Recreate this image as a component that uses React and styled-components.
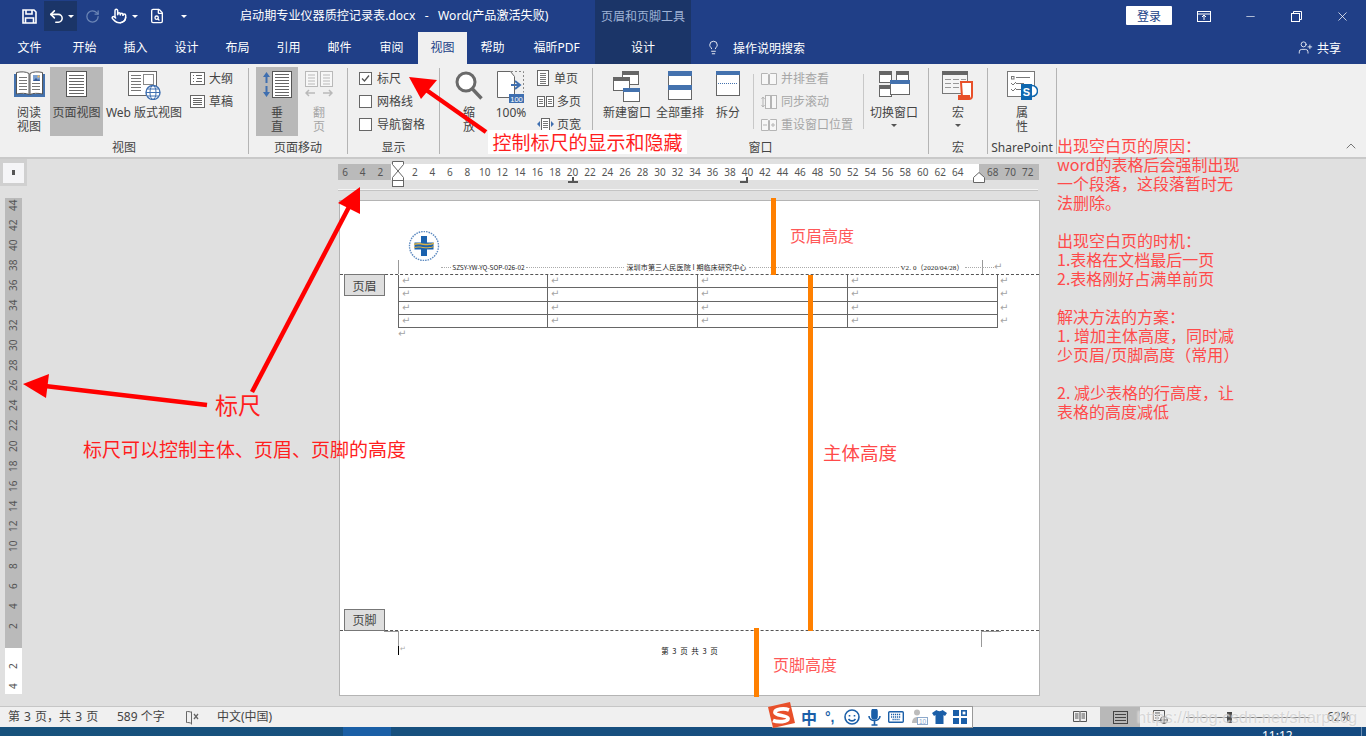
import React from 'react';
import styled, { createGlobalStyle } from 'styled-components';
import { Undo2, RotateCw, Pointer, FileSearch, Lightbulb, UserPlus, Minus, X, ChevronUp } from 'lucide-react';

const UI_FONT = '"Noto Sans", "Noto Sans CJK SC", sans-serif';
const CJK_FONT = '"Noto Sans CJK SC", "Noto Sans", sans-serif';

const GlobalStyle = createGlobalStyle`
  html, body {
    margin: 0;
    padding: 0;
    overflow: hidden;
    font-family: ${CJK_FONT};
  }
`;

const Shell = styled.div`
  position: relative;
  display: flex;
  flex-direction: column;
  width: 1366px;
  height: 736px;
  overflow: hidden;
  background: #e0e0e0;
`;

/* ---------- title bar ---------- */

const TitleBar = styled.div`
  display: flex;
  align-items: stretch;
  height: 32px;
  background: #203f87;
  color: #fff;
  font-size: 12px;
`;

const QuickAccess = styled.div`
  display: flex;
  align-items: center;
  width: 240px;
  padding-left: 22px;
  box-sizing: border-box;
`;

const QatSlot = styled.div`
  display: flex;
  align-items: center;
  justify-content: ${(p) => (p.$center ? 'center' : 'flex-start')};
  width: ${(p) => p.$w}px;
  height: 30px;
  margin-left: ${(p) => p.$ml || 0}px;
  background: ${(p) => (p.$active ? '#1b3568' : 'transparent')};
  color: ${(p) => (p.$dim ? '#6c86b6' : '#fff')};
`;

const Caret = styled.span`
  width: 0;
  height: 0;
  margin-left: ${(p) => p.$ml || 0}px;
  border-left: 3px solid transparent;
  border-right: 3px solid transparent;
  border-top: 3px solid ${(p) => p.$color || '#fff'};
`;

const DocTitle = styled.div`
  display: flex;
  align-items: center;
  width: 355px;
  padding-bottom: 2px;
  box-sizing: border-box;
  white-space: pre;
  font-size: 12.1px;
  font-family: ${UI_FONT};
`;

const ToolCaption = styled.div`
  display: flex;
  align-items: center;
  justify-content: center;
  width: 96px;
  padding-bottom: 2px;
  box-sizing: border-box;
  background: #1b3568;
  color: #9fb3d6;
  font-size: 12px;
`;

const LoginButton = styled.div`
  display: flex;
  align-items: center;
  justify-content: center;
  width: 46px;
  height: 19px;
  margin: 6px 0 0 435px;
  background: #fff;
  border-radius: 1px;
  color: #203f87;
  font-size: 12px;
`;

const WinBtn = styled.div`
  display: flex;
  align-items: center;
  justify-content: center;
  width: 46px;
  margin-left: ${(p) => p.$ml || 0}px;
`;

/* ---------- tabs ---------- */

const TabBar = styled.div`
  display: flex;
  align-items: stretch;
  height: 32px;
  background: #203f87;
  color: #fff;
  font-size: 12px;
`;

const Tab = styled.div`
  display: flex;
  align-items: center;
  justify-content: center;
  width: ${(p) => p.$w}px;
  padding-bottom: 2px;
  box-sizing: border-box;
  background: ${(p) => (p.$active ? '#f0f0f0' : p.$tool ? '#1b3568' : 'transparent')};
  color: ${(p) => (p.$active ? '#203f87' : '#fff')};
  font-family: ${UI_FONT};
`;

const SearchHint = styled.div`
  display: flex;
  align-items: center;
  gap: 12px;
  margin-left: 15px;
  padding-bottom: 2px;
  width: 592px;
  box-sizing: border-box;
`;

const ShareBox = styled.div`
  display: flex;
  align-items: center;
  gap: 4px;
  padding-bottom: 2px;
  box-sizing: border-box;
`;

/* ---------- ribbon ---------- */

const Ribbon = styled.div`
  position: relative;
  display: flex;
  height: 95px;
  box-sizing: border-box;
  padding-top: 4px;
  background: #f0f0f0;
  border-bottom: 2px solid #c9c9c9;
  color: #444;
  font-size: 12px;
`;

const Group = styled.div`
  display: flex;
  flex-direction: column;
  box-sizing: border-box;
  width: ${(p) => p.$w}px;
  height: 86px;
  border-right: 1px solid #b4b4b4;
`;

const GroupBody = styled.div`
  display: flex;
  height: 69px;
  margin-top: -1px;
  padding-left: ${(p) => p.$pl || 0}px;
`;

const GroupLabel = styled.div`
  height: 18px;
  line-height: 18px;
  padding-top: 3px;
  text-align: center;
  white-space: nowrap;
  font-family: ${UI_FONT};
`;

const BigButton = styled.div`
  display: flex;
  flex-direction: column;
  align-items: center;
  flex: none;
  width: ${(p) => p.$w}px;
  height: 69px;
  background: ${(p) => (p.$active ? '#b8b8b8' : 'transparent')};
  color: ${(p) => (p.$off ? '#a6a6a6' : '#444')};
`;

const BigIcon = styled.div`
  display: flex;
  align-items: flex-start;
  justify-content: center;
  height: 35px;
  padding-top: 4px;
`;

const BigText = styled.div`
  line-height: 14px;
  text-align: center;
  white-space: nowrap;
  font-family: ${UI_FONT};
`;

const CaretRow = styled.div`
  display: flex;
  justify-content: center;
  padding-top: 4px;
`;

const SmallList = styled.div`
  display: flex;
  flex-direction: column;
  flex: none;
  margin-left: ${(p) => p.$ml || 0}px;
  width: ${(p) => p.$w}px;
`;

const SmallRow = styled.div`
  display: flex;
  align-items: center;
  gap: ${(p) => p.$gap || 4}px;
  height: 23px;
  white-space: nowrap;
  color: ${(p) => (p.$off ? '#a6a6a6' : '#444')};
`;

const SmallText = styled.span`
  position: relative;
  top: -1px;
`;

const CheckBox = styled.span`
  display: flex;
  align-items: center;
  justify-content: center;
  width: 11px;
  height: 11px;
  border: 1px solid #666;
  background: #fff;
`;

const InnerDivider = styled.div`
  flex: none;
  width: 1px;
  height: 55px;
  margin: 7px ${(p) => p.$r}px 0 ${(p) => p.$l}px;
  background: #c8c8c8;
`;

const Collapse = styled.div`
  position: absolute;
  right: 7px;
  bottom: 0;
  color: #555;
`;

/* ---------- workspace ---------- */

const Workspace = styled.div`
  display: grid;
  grid-template-columns: 339px 701px;
  grid-template-rows: 41px 1fr;
  flex: none;
  height: 547px;
  background: #e0e0e0;
`;

const Corner = styled.div`
  display: flex;
  align-items: center;
  justify-content: center;
  width: 27px;
  height: 27px;
  background: #d0d0d0;
`;

const CornerInner = styled.div`
  display: flex;
  align-items: center;
  justify-content: center;
  width: 21px;
  height: 20px;
  background: #f5f5f7;
  &::after {
    content: '';
    width: 3px;
    height: 5px;
    background: #555;
  }
`;

const TopRulerWrap = styled.div`
  position: relative;
  margin-left: -1px;
  padding-top: 5px;
`;

const TopRuler = styled.div`
  display: flex;
  height: 16px;
  width: 701px;
  color: #555;
  font: 10px/16px "Noto Sans", sans-serif;
`;

const RulerSegment = styled.div`
  display: flex;
  flex: none;
  justify-content: ${(p) => (p.$end ? 'flex-end' : 'flex-start')};
  width: ${(p) => p.$w}px;
  padding: 0 ${(p) => p.$pr || 0}px 0 ${(p) => p.$pl || 0}px;
  box-sizing: border-box;
  background: ${(p) => (p.$white ? '#fff' : '#bababa')};
`;

const TopTick = styled.span`
  flex: none;
  width: 17.52px;
  text-align: center;
`;

const RulerRule = styled.div`
  width: 700px;
  height: 1px;
  margin-top: 9px;
  background: #f4f4f4;
  border-bottom: 1px solid #c4c4c4;
`;

const Marker = styled.svg`
  position: absolute;
  left: ${(p) => p.$x}px;
  top: ${(p) => p.$y}px;
`;

const LeftRail = styled.div`
  display: flex;
  flex-direction: column;
  padding: 0 0 0 5px;
  margin-top: -2px;
`;

const VerticalRuler = styled.div`
  display: flex;
  flex-direction: column;
  width: 17px;
  color: #555;
  font: 10px/17px "Noto Sans", sans-serif;
`;

const VerticalSegment = styled.div`
  display: flex;
  flex-direction: column;
  flex: none;
  justify-content: ${(p) => (p.$end ? 'flex-end' : 'flex-start')};
  height: ${(p) => p.$h}px;
  padding: ${(p) => p.$pt || 0}px 0 ${(p) => p.$pb || 0}px;
  box-sizing: border-box;
  background: ${(p) => (p.$white ? '#fff' : '#bababa')};
`;

const VerticalTick = styled.span`
  display: flex;
  align-items: center;
  justify-content: center;
  flex: none;
  height: 20.05px;
  writing-mode: vertical-rl;
  transform: rotate(180deg);
`;

/* ---------- page ---------- */

const Page = styled.div`
  position: relative;
  display: flex;
  flex-direction: column;
  box-sizing: border-box;
  width: 701px;
  height: 496px;
  background: #fff;
  border: 1px solid #b4b4b4;
`;

const HeaderArea = styled.div`
  position: relative;
  display: flex;
  flex-direction: column;
  justify-content: flex-end;
  flex: none;
  height: 74px;
  box-sizing: border-box;
  padding-left: 58px;
  border-bottom: 1px dashed #555;
`;

const LogoBox = styled.div`
  display: flex;
  margin: 0 0 -1px 10px;
`;

const HeaderLine = styled.div`
  display: flex;
  align-items: center;
  width: 583px;
  height: 14px;
  border-left: 1px solid #999;
  border-right: 1px solid #999;
  color: #222;
  font-size: 7px;
  white-space: nowrap;
`;

const HeaderCell = styled.span`
  flex: none;
  width: ${(p) => p.$w}px;
  text-align: center;
  font-family: ${(p) => (p.$serif ? '"Liberation Serif", "Noto Sans CJK SC", serif' : CJK_FONT)};
  font-size: ${(p) => p.$size || 7}px;
  letter-spacing: ${(p) => p.$ls || 0}px;
`;

const Leader = styled.span`
  flex: none;
  width: ${(p) => p.$w}px;
  margin-left: ${(p) => p.$ml || 0}px;
  border-top: 1px dotted #aaa;
`;

const HeaderTail = styled.span`
  position: absolute;
  left: 642px;
  bottom: 0;
  display: flex;
  align-items: center;
  height: 14px;
`;

const ZoneTag = styled.div`
  position: absolute;
  left: 4px;
  top: ${(p) => p.$top}px;
  z-index: 1;
  display: flex;
  align-items: center;
  justify-content: center;
  width: 39px;
  height: 20px;
  background: #dedede;
  border: 1px solid #777;
  color: #444;
  font-size: 12px;
`;

const DocTable = styled.div`
  display: flex;
  flex-direction: column;
  margin-left: 58px;
`;

const TableRow = styled.div`
  display: grid;
  grid-template-columns: repeat(4, 150px) 10px;
  height: 13.3px;
`;

const TableCell = styled.div`
  box-sizing: border-box;
  border-right: 1px solid #666;
  border-bottom: 1px solid #666;
  border-left: ${(p) => (p.$first ? '1px solid #666' : 'none')};
  padding-left: 3px;
`;

const ParaMark = styled.span`
  display: block;
  color: #a4a4a4;
  font: 10px/12px "DejaVu Sans", sans-serif;
  padding-left: ${(p) => p.$pl || 0}px;
`;

const BodyArea = styled.div`
  flex: 1;
  margin-left: 58px;
`;

const FooterArea = styled.div`
  position: relative;
  flex: none;
  height: 65px;
  box-sizing: border-box;
  padding-top: 15px;
  border-top: 1px dashed #555;
  text-align: center;
  color: #111;
  font-size: 7.5px;
  line-height: 10px;
  word-spacing: 2px;
`;

const CropMark = styled.div`
  position: absolute;
  top: 0;
  left: ${(p) => p.$x}px;
  width: ${(p) => p.$w}px;
  height: 15px;
  border-top: 1px solid #999;
  border-${(p) => p.$side}: 1px solid #999;
`;

const CursorMark = styled.div`
  position: absolute;
  left: 58px;
  top: 15px;
  width: 1px;
  height: 9px;
  background: #000;
`;

const FooterPara = styled.div`
  position: absolute;
  left: 60px;
  top: 13px;
  color: #aaa;
  font: 7px/10px "DejaVu Sans", sans-serif;
`;

/* ---------- status bar ---------- */

const StatusBar = styled.div`
  display: flex;
  align-items: center;
  flex: none;
  height: 21px;
  box-sizing: border-box;
  border-top: 1px solid #c6c6c6;
  background: #f0f0f0;
  color: #444;
  font-size: 12px;
  white-space: nowrap;
`;

const StatusText = styled.span`
  flex: none;
  width: ${(p) => p.$w}px;
  margin-left: ${(p) => p.$ml || 0}px;
  padding-bottom: 2px;
  font-family: ${UI_FONT};
  word-spacing: ${(p) => p.$ws || 0}px;
`;

const ViewSlot = styled.div`
  display: flex;
  align-items: center;
  justify-content: center;
  flex: none;
  width: ${(p) => p.$w}px;
  height: 20px;
  margin-left: ${(p) => p.$ml || 0}px;
  background: ${(p) => (p.$active ? '#b8b8b8' : 'transparent')};
`;

const ZoomTrack = styled.div`
  position: relative;
  flex: none;
  width: 124px;
  height: 1px;
  margin-left: 18px;
  background: #777;
  &::after {
    content: '';
    position: absolute;
    left: 41px;
    top: -5px;
    width: 5px;
    height: 11px;
    background: #444;
  }
`;

const Watermark = styled.div`
  position: absolute;
  left: 1137px;
  top: 705px;
  color: rgba(200, 200, 200, 0.7);
  font: 16.5px/24px "Liberation Sans", sans-serif;
  text-shadow: 0 0 2px rgba(255, 255, 255, 0.9);
  white-space: nowrap;
`;

const Taskbar = styled.div`
  display: flex;
  flex: 1;
  overflow: hidden;
  background: linear-gradient(90deg, #17527c 0%, #174e80 60%, #144a80 100%);
  color: #fff;
  font-size: 12px;
`;

const TaskActive = styled.div`
  width: 48px;
  margin-left: 343px;
  background: #1a5fa6;
`;

const Clock = styled.div`
  margin-left: 871px;
  line-height: 16px;
  margin-top: 1px;
  font-family: ${UI_FONT};
`;

const TaskEdge = styled.div`
  width: 1px;
  margin: 0 4px 0 auto;
  background: #6f8fb3;
`;

const ImeBar = styled.div`
  position: absolute;
  left: 772px;
  top: 706px;
  display: flex;
  align-items: center;
  gap: 8px;
  box-sizing: border-box;
  width: 201px;
  height: 22px;
  padding-left: 29px;
  background: #fff;
  border: 1px solid #999;
  border-left: none;
  color: #1b5fa8;
`;

const ImeChar = styled.span`
  font: 700 16px/20px ${CJK_FONT};
  color: #1b5fa8;
`;

const ImePunct = styled.span`
  width: 11px;
  font: 700 14px/16px "Liberation Sans", sans-serif;
  white-space: nowrap;
`;

const ImeItem = styled.span`
  display: flex;
  margin-left: ${(p) => p.$ml || 0}px;
`;

const ImeLogo = styled.svg`
  position: absolute;
  left: 767px;
  top: 702px;
`;

/* ---------- red notes drawn over the screenshot ---------- */

const Overlay = styled.svg`
  position: absolute;
  left: 0;
  top: 0;
  pointer-events: none;
`;

const Note = styled.div`
  position: absolute;
  left: ${(p) => p.$x}px;
  top: ${(p) => p.$y}px;
  color: ${(p) => p.$color || '#ff1e1e'};
  font: ${(p) => p.$size}px/1.2 ${CJK_FONT};
  white-space: nowrap;
`;

const WhiteNote = styled(Note)`
  display: flex;
  align-items: center;
  justify-content: center;
  width: 199px;
  height: 24px;
  background: #fff;
  line-height: 24px;
`;

const SideNote = styled.div`
  position: absolute;
  left: 1057px;
  top: 136px;
  color: #ff4a4a;
  font: 16px/19px ${CJK_FONT};
  white-space: pre;
`;

/* ---------- icons ---------- */

const lines = (x1, x2, ys, color = '#777') =>
  ys.map((y) => <line key={y} x1={x1} x2={x2} y1={y + 0.5} y2={y + 0.5} stroke={color} />);

const SaveIcon = () => (
  <svg width="15" height="15" viewBox="0 0 15 15" fill="none" stroke="#fff" strokeWidth="1.6">
    <path d="M1 1h11l2 2v11H1z" />
    <path d="M4 1v4h6V1M3.5 14V9h8v5" />
  </svg>
);

const BookIcon = () => (
  <svg width="31" height="26" viewBox="0 0 31 26">
    <path d="M0 3h2v20h27V3h2v23H0z" fill="#4472ae" />
    <path d="M2.500 1.500C7 .5 12 .5 15 2.500V23.500C12 22 7 22 2.500 23z" fill="#fff" stroke="#555" />
    <path d="M28.500 1.500C24 .5 19 .5 16 2.500V23.500C19 22 24 22 28.500 23z" fill="#fff" stroke="#555" />
    {lines(5, 13, [6, 9, 12, 15, 18])}
    {lines(18, 26, [12, 15, 18])}
    <rect x="19" y="4" width="7" height="6" fill="#7ca0cf" />
    <path d="M19 10l3-3 2 2 1-1 1 2z" fill="#345a96" />
    <rect x="23.500" y="4.500" width="2" height="2" fill="#f0b85a" />
  </svg>
);

const PageIcon = () => (
  <svg width="21" height="26" viewBox="0 0 21 26">
    <rect x=".5" y=".5" width="20" height="25" fill="#fff" stroke="#555" />
    {lines(3, 18, [4, 7, 10, 13, 16, 19, 22], '#666')}
  </svg>
);

const WebIcon = () => (
  <svg width="33" height="29" viewBox="0 0 33 29">
    <rect x=".5" y=".5" width="28" height="24" fill="#fff" stroke="#666" />
    {lines(3, 13, [4, 7, 10, 13, 16, 19], '#777')}
    <rect x="15.500" y="3.500" width="10" height="10" fill="#fff" stroke="#888" />
    <circle cx="25" cy="21.500" r="7" fill="#fff" stroke="#3f6fb0" strokeWidth="1.400" />
    <ellipse cx="25" cy="21.500" rx="3" ry="7" fill="none" stroke="#3f6fb0" />
    <path d="M18 21.500h14M19.500 18h11M19.500 25h11" stroke="#3f6fb0" />
  </svg>
);

const OutlineIcon = () => (
  <svg width="15" height="13" viewBox="0 0 15 13">
    <rect x=".5" y=".5" width="14" height="12" fill="#fff" stroke="#666" />
    <path d="M3 3.500h1M3 6.500h1M3 9.500h1M6 3.500h6M7 6.500h5M6 9.500h6" stroke="#666" />
  </svg>
);

const DraftIcon = () => (
  <svg width="15" height="13" viewBox="0 0 15 13">
    <rect x=".5" y=".5" width="14" height="12" fill="#fff" stroke="#666" />
    {lines(3, 12, [3, 5, 7, 9], '#666')}
  </svg>
);

const VerticalIcon = () => (
  <svg width="30" height="27" viewBox="0 0 30 27">
    <rect x="10.500" y=".5" width="19" height="26" fill="#fff" stroke="#555" />
    {lines(13, 27, [3, 6, 9, 12, 15, 18, 21, 24], '#666')}
    <path d="M4.500 1L1 6h2.500v6h2V6H8zM4.500 26L1 21h2.500v-6h2v6H8z" fill="#3f6fb0" />
  </svg>
);

const FlipIcon = () => (
  <svg width="28" height="27" viewBox="0 0 28 27" stroke="#b9b9b9" fill="#f7f7f7">
    <rect x=".5" y=".5" width="12" height="15" />
    <rect x="15.500" y=".5" width="12" height="15" />
    <path d="M3 4h7M3 7h7M3 10h7M3 13h7M18 4h7M18 7h7M18 10h7M18 13h7" />
    <path d="M1 22h9M4 19l-3 3 3 3M18 22h9M24 19l3 3-3 3" fill="none" strokeWidth="1.500" />
  </svg>
);

const MagnifierIcon = () => (
  <svg width="28" height="29" viewBox="0 0 28 29" fill="none">
    <circle cx="11" cy="11" r="9" fill="#fff" stroke="#6a6a6a" strokeWidth="3" />
    <path d="M17.500 18l9 9.500" stroke="#6a6a6a" strokeWidth="3.400" />
  </svg>
);

const ZoomHundredIcon = () => (
  <svg width="28" height="32" viewBox="0 0 28 32">
    <path d="M.5.5h13l4 5v21H.5z" fill="#fff" stroke="#666" />
    <path d="M14 .5h12.500v21" fill="none" stroke="#888" strokeDasharray="2 2" />
    <path d="M14 14h8M18 10l5 4-5 4" fill="none" stroke="#3f6fb0" strokeWidth="2" />
    <rect x="12" y="23" width="15" height="9" fill="#3f6fb0" />
    <text x="19.500" y="30.500" textAnchor="middle" fontSize="7.500" fill="#fff" fontFamily="Liberation Sans">100</text>
  </svg>
);

const SinglePageIcon = () => (
  <svg width="13" height="17" viewBox="0 0 13 17">
    <rect x=".5" y=".5" width="11" height="15" fill="#fff" stroke="#666" />
    {lines(3, 9, [3, 5, 7, 9, 11, 13], '#777')}
  </svg>
);

const MultiPageIcon = () => (
  <svg width="17" height="11" viewBox="0 0 17 11">
    <rect x=".5" y=".5" width="7" height="10" fill="#fff" stroke="#666" />
    <rect x="9.500" y=".5" width="7" height="10" fill="#fff" stroke="#666" />
    {lines(2, 6, [3, 5, 7], '#777')}
    {lines(11, 15, [3, 5, 7], '#777')}
  </svg>
);

const PageWidthIcon = () => (
  <svg width="17" height="13" viewBox="0 0 17 13">
    <rect x="4.500" y=".5" width="8" height="12" fill="#fff" stroke="#666" />
    {lines(6, 11, [3, 5, 7, 9], '#777')}
    <path d="M3 3v6L0 6zM14 3v6l3-3z" fill="#3f6fb0" />
  </svg>
);

const MiniWindow = ({ x, y, w, h, bar = '#666' }) => (
  <g>
    <rect x={x + 0.5} y={y + 0.5} width={w - 1} height={h - 1} fill="#fff" stroke="#666" />
    <rect x={x} y={y} width={w} height="4" fill={bar} />
  </g>
);

const NewWindowIcon = () => (
  <svg width="28" height="31" viewBox="0 0 28 31">
    <MiniWindow x={9} y={0} w={17} h={14} />
    <MiniWindow x={0} y={6} w={17} h={14} />
    <MiniWindow x={10} y={17} w={17} h={14} bar="#4472ae" />
  </svg>
);

const ArrangeIcon = () => (
  <svg width="24" height="29" viewBox="0 0 24 29">
    <rect x=".5" y=".5" width="23" height="28" fill="#fff" stroke="#666" />
    <rect width="24" height="5" fill="#4472ae" />
    <rect y="14" width="24" height="5" fill="#4472ae" />
  </svg>
);

const SplitIcon = () => (
  <svg width="24" height="25" viewBox="0 0 24 25">
    <rect x=".5" y=".5" width="23" height="24" fill="#fff" stroke="#666" />
    <rect width="24" height="4" fill="#4472ae" />
    <path d="M2 12.500h20" stroke="#4472ae" strokeDasharray="1 1" />
  </svg>
);

const SideBySideIcon = () => (
  <svg width="16" height="12" viewBox="0 0 16 12" fill="#f7f7f7" stroke="#b5b5b5">
    <path d="M.5.5h6l1 1v10h-7zM8.500 1.500l1-1h6v11h-7z" />
  </svg>
);

const SyncScrollIcon = () => (
  <svg width="16" height="14" viewBox="0 0 16 14" fill="#f7f7f7" stroke="#b5b5b5">
    <rect x="4.500" y=".5" width="5" height="13" />
    <rect x="10.500" y=".5" width="5" height="13" />
    <path d="M2 2v10M.5 4L2 2l1.500 2M.5 10L2 12l1.500-2" fill="none" />
  </svg>
);

const ResetWindowIcon = () => (
  <svg width="16" height="12" viewBox="0 0 16 12" fill="#f7f7f7" stroke="#b5b5b5">
    <path d="M.5.5h6l1 1v10h-7zM8.500 1.500l1-1h6v11h-7z" />
    <path d="M2 6h4M10 6h4M12 4v4" fill="none" />
  </svg>
);

const SwitchIcon = () => (
  <svg width="31" height="27" viewBox="0 0 31 27">
    <MiniWindow x={0} y={0} w={13} h={12} />
    <MiniWindow x={17} y={0} w={13} h={12} />
    <MiniWindow x={0} y={14} w={13} h={12} />
    <MiniWindow x={11} y={9} w={20} h={15} bar="#4472ae" />
  </svg>
);

const MacroIcon = () => (
  <svg width="32" height="29" viewBox="0 0 32 29">
    <rect x=".5" y=".5" width="25" height="22" fill="#f5f5f5" stroke="#777" />
    <rect width="26" height="4" fill="#666" />
    <path d="M3 8.500h6M11 8.500h6M19 8.500h5M3 12.500h6M11 12.500h6M19 12.500h5M3 16.500h6M11 16.500h6" stroke="#999" />
    <path d="M19 11h11v14a3 3 0 01-3 3H17v-2h3z" fill="#fff" stroke="#e8502a" strokeWidth="2" />
    <path d="M16 24h12v4H16z" fill="#e8502a" />
  </svg>
);

const SharePointIcon = () => (
  <svg width="31" height="30" viewBox="0 0 31 30">
    <rect x=".5" y=".5" width="27" height="25" fill="#fff" stroke="#777" />
    <rect x="4.500" y="5.500" width="2.500" height="2.500" fill="none" stroke="#777" />
    <path d="M9 6.500h14M9 12.500h8M9 18.500h6" stroke="#777" />
    <path d="M4 12l2 2 3-3M4 18l2 2 3-3" fill="none" stroke="#777" />
    <circle cx="25" cy="20" r="5.500" fill="#fff" stroke="#0f68b0" strokeWidth="1.500" />
    <rect x="14" y="13" width="11" height="16" fill="#0f68b0" />
    <text x="19.500" y="25" textAnchor="middle" fontSize="11" fontWeight="700" fill="#fff" fontFamily="Liberation Sans">S</text>
  </svg>
);

const HospitalLogo = () => (
  <svg width="32" height="30" viewBox="0 0 32 30">
    <circle cx="16" cy="15" r="14.500" fill="#fff" stroke="#5d8ac0" strokeWidth="1.400" strokeDasharray="1.500 1" />
    <path d="M13 5h6v6.500h6.500v7H19V25h-6v-6.500H6.500v-7H13z" fill="#1b62ae" />
    <path d="M6 12.500c6-2 13 2 20-1v1.500c-7 3-14-1-20 1z" fill="#d8b14a" />
    <path d="M6 16c6-2 13 2 20-1v1c-7 3-14-1-20 1z" fill="#d8b14a" />
  </svg>
);

const ProofIcon = () => (
  <svg width="15" height="15" viewBox="0 0 15 15" fill="none" stroke="#666">
    <path d="M6.500 2.500C5 1.500 3 1.500 1.500 1.500v11c1.500 0 3.500 0 5 1M6.500 1.500v13" />
    <path d="M9 4l4 5M13 4L9 9" strokeWidth="1.300" />
  </svg>
);

const ReadViewIcon = () => (
  <svg width="14" height="14" viewBox="0 0 14 14" fill="none" stroke="#555">
    <path d="M.5 1.500h6l.5.5.5-.5h6v10h-6l-.5.5-.5-.5h-6zM7 2v10" />
    <path d="M2 4h3.500M2 6h3.500M2 8h3.500M8.500 4H12M8.500 6H12M8.500 8H12" />
  </svg>
);

const PrintViewIcon = () => (
  <svg width="15" height="13" viewBox="0 0 15 13" fill="none" stroke="#444">
    <rect x=".5" y=".5" width="14" height="12" />
    <path d="M2 3.500h11M2 6.500h11M2 9.500h11" />
  </svg>
);

const WebViewIcon = () => (
  <svg width="15" height="14" viewBox="0 0 15 14" fill="none" stroke="#555">
    <path d="M9 10.500H.5V.5h11v6" />
    <path d="M2 3h5M2 5.500h5M2 8h4" />
    <circle cx="11" cy="10" r="3.500" />
    <path d="M8 10h6M11 7v6" />
  </svg>
);

const Smile = () => (
  <svg width="16" height="16" viewBox="0 0 16 16" fill="none" stroke="#1b5fa8" strokeWidth="1.600">
    <circle cx="8" cy="8" r="7" />
    <path d="M5.500 6v1.500M10.500 6v1.500M4.500 10c2 2.500 5 2.500 7 0" />
  </svg>
);

const Mic = () => (
  <svg width="13" height="17" viewBox="0 0 13 17" fill="none" stroke="#1b5fa8" strokeWidth="1.600">
    <rect x="4" y="0" width="5" height="10" rx="2.500" fill="#1b5fa8" />
    <path d="M1 7c0 6 11 6 11 0M6.500 12v4M3.500 16h6" />
  </svg>
);

const Keyboard = () => (
  <svg width="16" height="12" viewBox="0 0 16 12">
    <rect x=".7" y=".7" width="14.600" height="10.600" rx="1" fill="none" stroke="#1b5fa8" strokeWidth="1.400" />
    <path d="M3 3.500h10M3 6h10M4.500 8.500h7" stroke="#1b5fa8" strokeWidth="1.400" strokeDasharray="1.200 .8" />
  </svg>
);

const UserTen = () => (
  <svg width="17" height="16" viewBox="0 0 17 16">
    <circle cx="6" cy="3.500" r="3" fill="#bcbcbc" />
    <path d="M1 14c0-8 10-8 10 0z" fill="#bcbcbc" />
    <rect x="6.500" y="8.500" width="10" height="7" fill="#fff" stroke="#8da9cc" />
    <text x="11.500" y="14.500" textAnchor="middle" fontSize="6.500" fill="#8da9cc" fontFamily="Liberation Sans">10</text>
  </svg>
);

const Shirt = () => (
  <svg width="15" height="14" viewBox="0 0 15 14">
    <path d="M4.500 0c1 1.500 5 1.500 6 0L15 3l-2 3-1.500-1v9h-8V5L2 6 0 3z" fill="#1b5fa8" />
  </svg>
);

const Tiles = () => (
  <svg width="14" height="14" viewBox="0 0 14 14">
    <rect width="6" height="6" fill="#1b5fa8" />
    <rect x="8.800" y=".8" width="4.400" height="4.400" fill="none" stroke="#1b5fa8" strokeWidth="1.600" />
    <rect y="8" width="6" height="6" fill="#1b5fa8" />
    <rect x="8" y="8" width="6" height="6" fill="#1b5fa8" />
  </svg>
);

/* ---------- data ---------- */

const TABS = [
  ['文件', 59], ['开始', 51], ['插入', 51], ['设计', 51], ['布局', 51], ['引用', 51], ['邮件', 51], ['审阅', 53],
];

const topNumbers = Array.from({ length: 32 }, (_, i) => (i + 1) * 2);
const verticalNumbers = Array.from({ length: 22 }, (_, i) => 44 - i * 2);

const Arrow = ({ from, to, head }) => (
  <g fill="#ff0000" stroke="none">
    <line x1={from[0]} y1={from[1]} x2={to[0]} y2={to[1]} stroke="#ff0000" strokeWidth="4.500" />
    <polygon points={head} />
  </g>
);

const App = () => (
  <Shell>
    <GlobalStyle />

    <TitleBar>
      <QuickAccess>
        <SaveIcon />
        <QatSlot $w={33} $ml={7} $active $center>
          <Undo2 size={17} strokeWidth={2.2} />
          <Caret $ml={3} />
        </QatSlot>
        <QatSlot $w={16} $ml={8} $dim><RotateCw size={15} /></QatSlot>
        <QatSlot $w={28} $ml={10}>
          <Pointer size={16} strokeWidth={2.2} />
          <Caret $ml={5} />
        </QatSlot>
        <QatSlot $w={18} $ml={10}><FileSearch size={16} /></QatSlot>
        <QatSlot $w={10} $ml={14}><Caret /></QatSlot>
      </QuickAccess>
      <DocTitle>{'启动期专业仪器质控记录表.docx   -   Word(产品激活失败)'}</DocTitle>
      <ToolCaption>页眉和页脚工具</ToolCaption>
      <LoginButton>登录</LoginButton>
      <WinBtn $ml={9}>
        <svg width="14" height="11" viewBox="0 0 14 11" fill="none" stroke="#fff">
          <rect x=".5" y=".5" width="13" height="10" />
          <path d="M1 3h12M7 9V4M5 6l2-2 2 2" />
        </svg>
      </WinBtn>
      <WinBtn><Minus size={13} strokeWidth={1.2} /></WinBtn>
      <WinBtn>
        <svg width="11" height="11" viewBox="0 0 11 11" fill="none" stroke="#fff">
          <rect x=".5" y="2.500" width="8" height="8" />
          <path d="M2.500 2.500V.5h8v8h-2" />
        </svg>
      </WinBtn>
      <WinBtn><X size={15} strokeWidth={1.2} /></WinBtn>
    </TitleBar>

    <TabBar>
      {TABS.map(([name, w]) => <Tab key={name} $w={w}>{name}</Tab>)}
      <Tab $w={49} $active>视图</Tab>
      <Tab $w={51}>帮助</Tab>
      <Tab $w={77}>福昕PDF</Tab>
      <Tab $w={96} $tool>设计</Tab>
      <SearchHint>
        <Lightbulb size={15} strokeWidth={1.4} />
        操作说明搜索
      </SearchHint>
      <ShareBox>
        <UserPlus size={15} strokeWidth={1.3} />
        共享
      </ShareBox>
    </TabBar>

    <Ribbon>
      <Group $w={249}>
        <GroupBody $pl={8}>
          <BigButton $w={42}>
            <BigIcon><BookIcon /></BigIcon>
            <BigText>阅读<br />视图</BigText>
          </BigButton>
          <BigButton $w={53} $active>
            <BigIcon><PageIcon /></BigIcon>
            <BigText>页面视图</BigText>
          </BigButton>
          <BigButton $w={82}>
            <BigIcon><WebIcon /></BigIcon>
            <BigText>Web 版式视图</BigText>
          </BigButton>
          <SmallList $w={55} $ml={5}>
            <SmallRow><OutlineIcon /><SmallText>大纲</SmallText></SmallRow>
            <SmallRow><DraftIcon /><SmallText>草稿</SmallText></SmallRow>
          </SmallList>
        </GroupBody>
        <GroupLabel>视图</GroupLabel>
      </Group>

      <Group $w={99}>
        <GroupBody $pl={7}>
          <BigButton $w={42} $active>
            <BigIcon><VerticalIcon /></BigIcon>
            <BigText>垂<br />直</BigText>
          </BigButton>
          <BigButton $w={42} $off>
            <BigIcon><FlipIcon /></BigIcon>
            <BigText>翻<br />页</BigText>
          </BigButton>
        </GroupBody>
        <GroupLabel>页面移动</GroupLabel>
      </Group>

      <Group $w={92}>
        <GroupBody $pl={11}>
          <SmallList $w={75}>
            <SmallRow $gap={5}>
              <CheckBox>
                <svg width="9" height="9" viewBox="0 0 9 9" fill="none" stroke="#555" strokeWidth="1.300">
                  <path d="M1 4.500l2.500 2.500L8 1.500" />
                </svg>
              </CheckBox>
              <SmallText>标尺</SmallText>
            </SmallRow>
            <SmallRow $gap={5}><CheckBox /><SmallText>网格线</SmallText></SmallRow>
            <SmallRow $gap={5}><CheckBox /><SmallText>导航窗格</SmallText></SmallRow>
          </SmallList>
        </GroupBody>
        <GroupLabel>显示</GroupLabel>
      </Group>

      <Group $w={153}>
        <GroupBody $pl={9}>
          <BigButton $w={40}>
            <BigIcon><MagnifierIcon /></BigIcon>
            <BigText>缩<br />放</BigText>
          </BigButton>
          <BigButton $w={44}>
            <BigIcon><ZoomHundredIcon /></BigIcon>
            <BigText>100%</BigText>
          </BigButton>
          <SmallList $w={56} $ml={4}>
            <SmallRow $gap={4}><SinglePageIcon /><SmallText>单页</SmallText></SmallRow>
            <SmallRow $gap={3}><MultiPageIcon /><SmallText>多页</SmallText></SmallRow>
            <SmallRow $gap={3}><PageWidthIcon /><SmallText>页宽</SmallText></SmallRow>
          </SmallList>
        </GroupBody>
      </Group>

      <Group $w={336}>
        <GroupBody $pl={7}>
          <BigButton $w={54}>
            <BigIcon><NewWindowIcon /></BigIcon>
            <BigText>新建窗口</BigText>
          </BigButton>
          <BigButton $w={52}>
            <BigIcon><ArrangeIcon /></BigIcon>
            <BigText>全部重排</BigText>
          </BigButton>
          <BigButton $w={44}>
            <BigIcon><SplitIcon /></BigIcon>
            <BigText>拆分</BigText>
          </BigButton>
          <InnerDivider $l={3} $r={7} />
          <SmallList $w={98}>
            <SmallRow $off><SideBySideIcon /><SmallText>并排查看</SmallText></SmallRow>
            <SmallRow $off><SyncScrollIcon /><SmallText>同步滚动</SmallText></SmallRow>
            <SmallRow $off><ResetWindowIcon /><SmallText>重设窗口位置</SmallText></SmallRow>
          </SmallList>
          <InnerDivider $l={4} $r={3} />
          <BigButton $w={54}>
            <BigIcon><SwitchIcon /></BigIcon>
            <BigText>切换窗口</BigText>
            <CaretRow><Caret $color="#555" /></CaretRow>
          </BigButton>
        </GroupBody>
        <GroupLabel>窗口</GroupLabel>
      </Group>

      <Group $w={59}>
        <GroupBody>
          <BigButton $w={58}>
            <BigIcon><MacroIcon /></BigIcon>
            <BigText>宏</BigText>
            <CaretRow><Caret $color="#555" /></CaretRow>
          </BigButton>
        </GroupBody>
        <GroupLabel>宏</GroupLabel>
      </Group>

      <Group $w={69}>
        <GroupBody>
          <BigButton $w={68}>
            <BigIcon><SharePointIcon /></BigIcon>
            <BigText>属<br />性</BigText>
          </BigButton>
        </GroupBody>
        <GroupLabel>SharePoint</GroupLabel>
      </Group>

      <Collapse><ChevronUp size={16} strokeWidth={1.2} /></Collapse>
    </Ribbon>

    <Workspace>
      <Corner><CornerInner /></Corner>
      <TopRulerWrap>
        <TopRuler>
          <RulerSegment $w={53} $end $pr={2}>
            {[6, 4, 2].map((n) => <TopTick key={n}>{n}</TopTick>)}
          </RulerSegment>
          <RulerSegment $w={588} $white $pl={15}>
            {topNumbers.map((n) => <TopTick key={n}>{n}</TopTick>)}
          </RulerSegment>
          <RulerSegment $w={60} $pl={5}>
            {[68, 70, 72].map((n) => <TopTick key={n}>{n}</TopTick>)}
          </RulerSegment>
        </TopRuler>
        <RulerRule />
        <Marker $x={54} $y={2} width="12" height="27" viewBox="0 0 12 27" fill="#fff" stroke="#666">
          <path d="M.5.5h11v3L6 10 .5 3.500zM6 10l5.500 6.500v3H.5v-3z" />
          <rect x=".5" y="19.500" width="11" height="6" />
        </Marker>
        <Marker $x={230} $y={18} width="10" height="7" viewBox="0 0 10 7">
          <path d="M4 0h2v4h4v2H0V4h4z" fill="#555" />
        </Marker>
        <Marker $x={402} $y={18} width="9" height="7" viewBox="0 0 9 7">
          <path d="M6 0h2v6H0V4h6z" fill="#555" />
        </Marker>
        <Marker $x={635} $y={13} width="12" height="11" viewBox="0 0 12 11" fill="#fff" stroke="#666">
          <path d="M6 .5l5.500 5v5H.5v-5z" />
        </Marker>
      </TopRulerWrap>

      <LeftRail>
        <VerticalRuler>
          <VerticalSegment $h={450} $end $pb={12}>
            {verticalNumbers.map((n) => <VerticalTick key={n}>{n}</VerticalTick>)}
          </VerticalSegment>
          <VerticalSegment $h={46} $white $pt={8}>
            {[2, 4].map((n) => <VerticalTick key={n}>{n}</VerticalTick>)}
          </VerticalSegment>
        </VerticalRuler>
      </LeftRail>

      <Page>
        <HeaderArea>
          <LogoBox><HospitalLogo /></LogoBox>
          <HeaderLine>
            <Leader $w={10} $ml={42} />
            <HeaderCell $w={75} $size={6.5}>SZSY-YW-YQ-SOP-026-02</HeaderCell>
            <Leader $w={98} />
            <HeaderCell $w={125} $ls={0.15}>深圳市第三人民医院 I 期临床研究中心</HeaderCell>
            <Leader $w={150} />
            <HeaderCell $w={66} $serif $ls={0.1}>V2. 0（2020/04/28）</HeaderCell>
            <Leader $w={16} />
          </HeaderLine>
          <HeaderTail>
            <Leader $w={12} />
            <ParaMark>↵</ParaMark>
          </HeaderTail>
          <ZoneTag $top={73}>页眉</ZoneTag>
        </HeaderArea>
        <DocTable>
          {[0, 1, 2, 3].map((row) => (
            <TableRow key={row}>
              <TableCell $first><ParaMark>↵</ParaMark></TableCell>
              <TableCell><ParaMark>↵</ParaMark></TableCell>
              <TableCell><ParaMark>↵</ParaMark></TableCell>
              <TableCell><ParaMark>↵</ParaMark></TableCell>
              <ParaMark $pl={2}>↵</ParaMark>
            </TableRow>
          ))}
        </DocTable>
        <BodyArea><ParaMark>↵</ParaMark></BodyArea>
        <FooterArea>
          <ZoneTag $top={-22}>页脚</ZoneTag>
          <CropMark $x={44} $w={14} $side="right" />
          <CursorMark />
          <FooterPara>↵</FooterPara>
          <CropMark $x={641} $w={19} $side="left" />
          第 3 页 共 3 页
        </FooterArea>
      </Page>
    </Workspace>

    <StatusBar>
      <StatusText $w={109} $ml={8} $ws={1}>第 3 页，共 3 页</StatusText>
      <StatusText $w={68}>589 个字</StatusText>
      <ProofIcon />
      <StatusText $w={857} $ml={17}>中文(中国)</StatusText>
      <ViewSlot $w={14} $ml={-1}><ReadViewIcon /></ViewSlot>
      <ViewSlot $w={40} $ml={13} $active><PrintViewIcon /></ViewSlot>
      <ViewSlot $w={15} $ml={13}><WebViewIcon /></ViewSlot>
      <ZoomTrack />
      <StatusText $w={30} $ml={17}>62%</StatusText>
    </StatusBar>

    <Taskbar>
      <TaskActive />
      <Clock>11:12</Clock>
      <TaskEdge />
    </Taskbar>

    <ImeBar>
      <ImeChar>中</ImeChar>
      <ImePunct>°,</ImePunct>
      <Smile />
      <Mic />
      <ImeItem $ml={-1}><Keyboard /></ImeItem>
      <ImeItem $ml={-1}><UserTen /></ImeItem>
      <ImeItem $ml={-4}><Shirt /></ImeItem>
      <ImeItem $ml={-2}><Tiles /></ImeItem>
    </ImeBar>
    <ImeLogo width="29" height="27" viewBox="0 0 29 27">
      <path d="M1 5L23 0l5 21-22 5z" fill="#e8502a" />
      <path d="M22 8c-5-2-14-1-14 2.500S21 13 21 16.500s-10 4-15 2" fill="none" stroke="#fff" strokeWidth="3.800" />
    </ImeLogo>
    <Watermark>https://blog.csdn.net/sharpdcg</Watermark>

    <Overlay width="1366" height="736" viewBox="0 0 1366 736">
      <Arrow from={[486, 132]} to={[422, 87]} head="409,77 437,80 421,99" />
      <Arrow from={[252, 392]} to={[350, 205]} head="360,187 338,203 360,214" />
      <Arrow from={[207, 405]} to={[45, 386]} head="23,384 49,374 46,398" />
      <rect x="771" y="198" width="5" height="77" fill="#ff8000" />
      <rect x="808" y="275" width="5" height="356" fill="#ff8000" />
      <rect x="754" y="628" width="5" height="69" fill="#ff8000" />
    </Overlay>

    <WhiteNote $x={488} $y={130} $size={19}>控制标尺的显示和隐藏</WhiteNote>
    <Note $x={215} $y={391} $size={23}>标尺</Note>
    <Note $x={83} $y={438} $size={19}>标尺可以控制主体、页眉、页脚的高度</Note>
    <Note $x={790} $y={226} $size={16} $color="#ff5858">页眉高度</Note>
    <Note $x={823} $y={441} $size={18.500} $color="#ff4a4a">主体高度</Note>
    <Note $x={773} $y={655} $size={16} $color="#ff5858">页脚高度</Note>
    <SideNote>{`出现空白页的原因：
word的表格后会强制出现
一个段落，这段落暂时无
法删除。

出现空白页的时机：
1.表格在文档最后一页
2.表格刚好占满单前页

解决方法的方案：
1. 增加主体高度，同时减
少页眉/页脚高度（常用）

2. 减少表格的行高度，让
表格的高度减低`}</SideNote>
  </Shell>
);

export default App;
